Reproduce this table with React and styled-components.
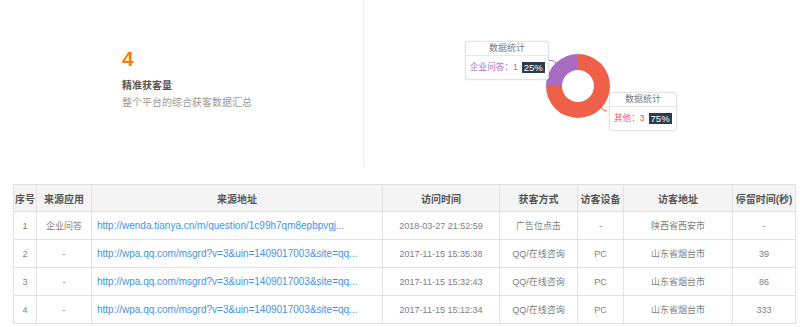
import React from 'react';
import styled, { createGlobalStyle } from 'styled-components';

const GlobalStyle = createGlobalStyle`
    body {
        margin: 0;
        background: #fff;
        font-family: "Liberation Sans", "Noto Sans CJK SC", sans-serif;
    }
`

const Page = styled.div`
    width: 800px;
    height: 327px;
    overflow: hidden;
`

const Top = styled.div`
    display: flex;
    height: 167px;
`

const LeftPanel = styled.div`
    width: 364px;
    border-right: 1px solid #eeeeee;
    padding: 46px 0 0 122px;
    box-sizing: border-box;
`

const Count = styled.div`
    font-size: 21px;
    font-weight: bold;
    color: #f97e15;
    line-height: 26px;
`

const Label = styled.div`
    margin-top: 7px;
    font-size: 10px;
    font-weight: bold;
    color: #555;
    line-height: 14px;
`

const SubLabel = styled.div`
    margin-top: 3px;
    font-size: 10px;
    color: #999;
    line-height: 14px;
`

const RightPanel = styled.div`
    flex: 1;
    padding: 40px 0 0 100px;
`

const Chart = styled.div`
    position: relative;
    width: 215px;
    height: 92px;
`

const Tooltip = styled.div`
    position: absolute;
    left: ${({ $x }) => $x}px;
    top: ${({ $y }) => $y}px;
    width: ${({ $w }) => $w}px;
    background: #fff;
    border: 1px solid #e3e3e3;
    border-radius: 3px;
    box-shadow: 0 0 3px rgba(0,0,0,0.08);
    box-sizing: border-box;
`

const TipHead = styled.div`
    height: 13px;
    line-height: 13px;
    border-bottom: 1px solid #e8e8e8;
    text-align: center;
    font-size: 9px;
    color: #777;
`

const TipBody = styled.div`
    display: flex;
    align-items: center;
    white-space: nowrap;
    padding: 5px 3px 6px 4px;
    font-size: 8.6px;
    line-height: 12px;
    color: ${({ $color }) => $color};
`

const Badge = styled.span`
    margin-left: 4px;
    background: #2d3a4b;
    color: #fff;
    padding: 0 2px;
    font-size: 9.5px;
    line-height: 11px;
`

const Table = styled.table`
    margin: 17px 0 0 13px;
    width: 782px;
    border-collapse: collapse;
    table-layout: fixed;
    font-size: 9px;
    color: #808080;
`

const Th = styled.th`
    height: 26px;
    background: #f4f4f4;
    border: 1px solid #e2e2e2;
    font-size: 10px;
    font-weight: bold;
    color: #555;
    padding: 0;
    white-space: nowrap;
`

const Td = styled.td`
    height: 27px;
    border: 1px solid #e2e2e2;
    text-align: center;
    padding: 0;
    white-space: nowrap;
`

const LinkTd = styled(Td)`
    text-align: left;
    padding-left: 5px;
    font-size: 10px;
    color: #4493e6;
`

const columns = [
    ['序号', 23], ['来源应用', 55], ['来源地址', 291], ['访问时间', 117],
    ['获客方式', 78], ['访客设备', 46], ['访客地址', 109], ['停留时间(秒)', 63],
];

const rows = [
    ['1', '企业问答', 'http://wenda.tianya.cn/m/question/1c99h7qm8epbpvgj...', '2018-03-27 21:52:59', '广告位点击', '-', '陕西省西安市', '-'],
    ['2', '-', 'http://wpa.qq.com/msgrd?v=3&uin=1409017003&site=qq...', '2017-11-15 15:35:38', 'QQ/在线咨询', 'PC', '山东省烟台市', '39'],
    ['3', '-', 'http://wpa.qq.com/msgrd?v=3&uin=1409017003&site=qq...', '2017-11-15 15:32:43', 'QQ/在线咨询', 'PC', '山东省烟台市', '86'],
    ['4', '-', 'http://wpa.qq.com/msgrd?v=3&uin=1409017003&site=qq...', '2017-11-15 15:12:34', 'QQ/在线咨询', 'PC', '山东省烟台市', '333'],
];

const Donut = () => (
    <svg width="215" height="92" viewBox="0 0 215 92">
        <path d="M 114 14 A 32 32 0 1 1 82 46 L 98 46 A 16 16 0 1 0 114 30 Z" fill="#ef6049" />
        <path d="M 82 46 A 32 32 0 0 1 114 14 L 114 30 A 16 16 0 0 0 98 46 Z" fill="#a86cc1" />
        <path d="M 85 20 Q 90 20 92 23" stroke="#a86cc1" strokeWidth="1" fill="none" />
        <path d="M 137 67 Q 139 71 143 71" stroke="#ef6049" strokeWidth="1" fill="none" />
    </svg>
);

const App = () => {
    return (
        <Page>
            <GlobalStyle />
            <Top>
                <LeftPanel>
                    <Count>4</Count>
                    <Label>精准获客量</Label>
                    <SubLabel>整个平台的综合获客数据汇总</SubLabel>
                </LeftPanel>
                <RightPanel>
                    <Chart>
                        <Donut />
                        <Tooltip $x={1} $y={1} $w={84}>
                            <TipHead>数据统计</TipHead>
                            <TipBody $color="#a86cc1">企业问答：1<Badge>25%</Badge></TipBody>
                        </Tooltip>
                        <Tooltip $x={145} $y={52} $w={68}>
                            <TipHead>数据统计</TipHead>
                            <TipBody $color="#ef6049">其他：3<Badge>75%</Badge></TipBody>
                        </Tooltip>
                    </Chart>
                </RightPanel>
            </Top>
            <Table>
                <colgroup>
                    {columns.map(([name, w]) => <col key={name} style={{ width: w }} />)}
                </colgroup>
                <thead>
                    <tr>
                        {columns.map(([name]) => <Th key={name}>{name}</Th>)}
                    </tr>
                </thead>
                <tbody>
                    {rows.map((row) => (
                        <tr key={row[0]}>
                            {row.map((cell, i) => (
                                i === 2
                                    ? <LinkTd key={i}>{cell}</LinkTd>
                                    : <Td key={i}>{cell}</Td>
                            ))}
                        </tr>
                    ))}
                </tbody>
            </Table>
        </Page>
    );
};

export default App;
